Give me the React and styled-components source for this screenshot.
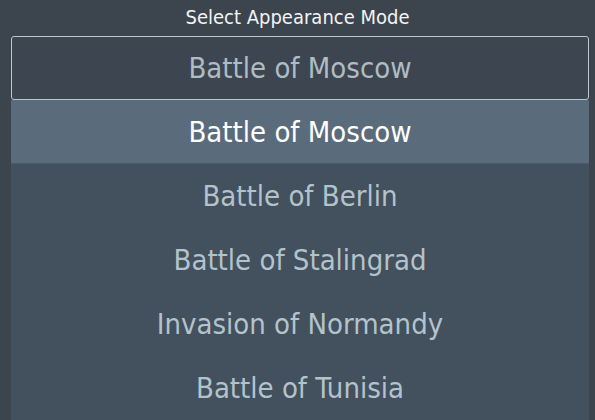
import React from "react";
import styled, { createGlobalStyle } from "styled-components";

const GlobalStyle = createGlobalStyle`
    html, body {
        margin: 0;
        padding: 0;
        background: #3c444e;
        font-family: "DejaVu Sans Condensed", "DejaVu Sans", Verdana, sans-serif;
        overflow: hidden;
    }
`;

const Page = styled.div`
    width: 595px;
    height: 420px;
    overflow: hidden;
    background: #3c444e;
`;

const Title = styled.div`
    height: 36px;
    display: flex;
    align-items: center;
    justify-content: center;
    color: #f2f4f5;
    font-size: 20px;
    padding-bottom: 2px;
    box-sizing: border-box;
`;

const Current = styled.div`
    margin: 0 6px 0 11px;
    height: 64px;
    box-sizing: border-box;
    border: 1px solid #b9c7cf;
    border-radius: 3px;
    display: flex;
    align-items: center;
    justify-content: center;
    color: #aebcc4;
    font-size: 29px;
    background: #3d4650;
`;

const List = styled.div`
    margin: 0 6px 0 11px;
    background: #43505d;
`;

const Option = styled.div`
    height: 64px;
    display: flex;
    align-items: center;
    justify-content: center;
    font-size: 29px;
    color: ${(props) => (props.$active ? "#ffffff" : "#b3c3cb")};
    background: ${(props) => (props.$active ? "#5a6b7c" : "transparent")};
    border-bottom: ${(props) => (props.$active ? "1px solid #4c5967" : "none")};
    box-sizing: border-box;
`;

const options = [
    "Battle of Moscow",
    "Battle of Berlin",
    "Battle of Stalingrad",
    "Invasion of Normandy",
    "Battle of Tunisia",
];

const App = () => {
    return (
        <Page>
            <GlobalStyle />
            <Title>Select Appearance Mode</Title>
            <Current>Battle of Moscow</Current>
            <List>
                {options.map((name, i) => (
                    <Option key={name} $active={i === 0}>
                        {name}
                    </Option>
                ))}
            </List>
        </Page>
    );
};

export default App;
